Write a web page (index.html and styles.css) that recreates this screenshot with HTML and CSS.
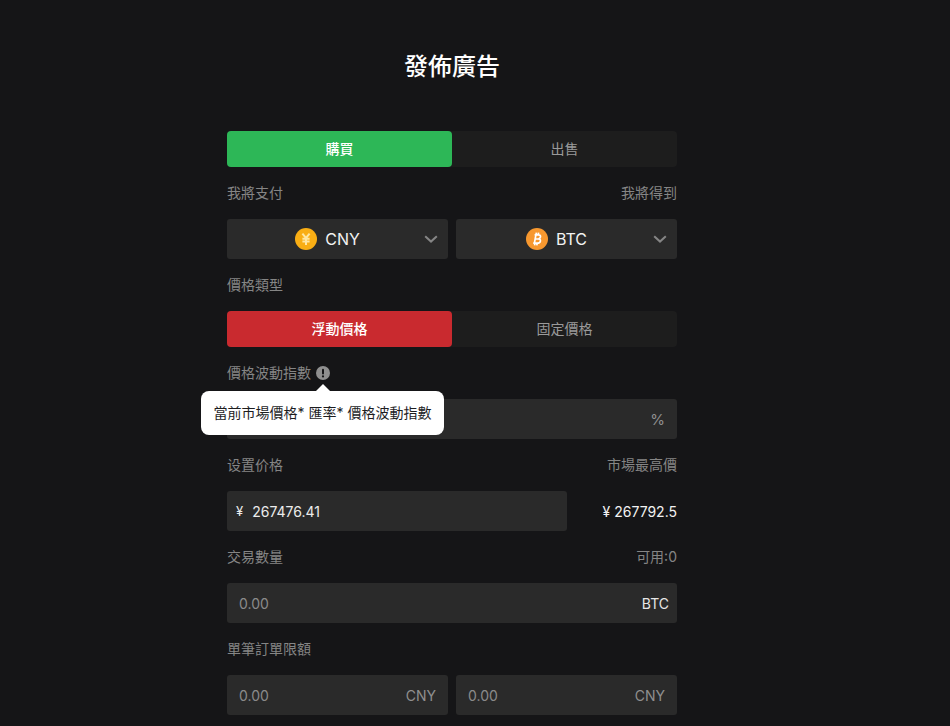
FILE: index.html
```html
<!DOCTYPE html>
<html lang="zh-Hant">
<head>
    <meta charset="UTF-8">
    <meta name="viewport" content="width=device-width, initial-scale=1.0">
    <title>發佈廣告</title>
    <link rel="stylesheet" href="styles.css">
</head>
<body>

<div class="page">
    <h1 class="title">發佈廣告</h1>

    <form class="ad-form">
        <div class="tabs">
            <div class="tab tab-buy">購買</div>
            <div class="tab">出售</div>
        </div>

        <div class="label-row">
            <span>我將支付</span>
            <span>我將得到</span>
        </div>
        <div class="pair">
            <div class="box select">
                <span class="coin">
                    <svg class="coin-icon" viewBox="0 0 22 22">
                        <circle cx="11" cy="11" r="11" fill="#f9ae14"/>
                        <path d="M7.4 5.6 11 10l3.6-4.4M7.4 10.8h7.2M7.4 13.4h7.2M11 10v7" fill="none" stroke="#ffe7a3" stroke-width="2"/>
                    </svg>
                    CNY
                </span>
                <svg class="chevron" viewBox="0 0 14 8"><path d="M1.2 1.2 7 6.6l5.8-5.4" fill="none" stroke="#858585" stroke-width="2"/></svg>
            </div>
            <div class="box select">
                <span class="coin">
                    <svg class="coin-icon" viewBox="0 0 22 22">
                        <circle cx="11" cy="11" r="11" fill="#f7982f"/>
                        <path d="M8.6 6.8h3.8c1.5 0 2.3.9 2.1 2.1-.1 1-.8 1.7-2 1.9 1.4.2 2.1 1.1 1.9 2.3-.2 1.4-1.4 2.1-3 2.1H7.2M9.9 6.8l-1.5 8.4M9.3 11h3.2M10.4 4.6l-.4 2.2M12.6 4.6l-.4 2.2M9 15.2l-.4 2.2M11.2 15.2l-.4 2.2" fill="none" stroke="#fff" stroke-width="1.7"/>
                    </svg>
                    BTC
                </span>
                <svg class="chevron" viewBox="0 0 14 8"><path d="M1.2 1.2 7 6.6l5.8-5.4" fill="none" stroke="#858585" stroke-width="2"/></svg>
            </div>
        </div>

        <div class="label-row">
            <span>價格類型</span>
        </div>
        <div class="tabs">
            <div class="tab tab-float">浮動價格</div>
            <div class="tab">固定價格</div>
        </div>

        <div class="label-row">
            <span class="label-hint">
                價格波動指數
                <svg class="hint-icon" viewBox="0 0 14 14">
                    <circle cx="7" cy="7" r="7" fill="#8f8f8f"/>
                    <rect x="6" y="2.8" width="2" height="5.6" rx="1" fill="#151517"/>
                    <circle cx="7" cy="10.4" r="1.1" fill="#151517"/>
                </svg>
            </span>
        </div>
        <div class="tip-wrap">
            <div class="box input">
                <span class="unit unit-muted unit-percent">%</span>
            </div>
            <div class="tooltip">當前市場價格* 匯率* 價格波動指數</div>
        </div>

        <div class="label-row">
            <span>设置价格</span>
            <span>市場最高價</span>
        </div>
        <div class="price-row">
            <div class="box input price-input">
                <span class="yen">¥</span>
                <span class="value">267476.41</span>
            </div>
            <span class="best-price">¥ 267792.5</span>
        </div>

        <div class="label-row">
            <span>交易數量</span>
            <span>可用:0</span>
        </div>
        <div class="box input input-tight">
            <span class="placeholder">0.00</span>
            <span class="unit">BTC</span>
        </div>

        <div class="label-row">
            <span>單筆訂單限額</span>
        </div>
        <div class="pair">
            <div class="box input">
                <span class="placeholder">0.00</span>
                <span class="unit unit-muted">CNY</span>
            </div>
            <div class="box input">
                <span class="placeholder">0.00</span>
                <span class="unit unit-muted">CNY</span>
            </div>
        </div>
    </form>
</div>

</body>
</html>
```

FILE: styles.css
```css
body, html {
    margin: 0;
    padding: 0;
    height: 100%;
    overflow: hidden;
    background-color: #151517;
    color: #fff;
    font-family: Inter, "Noto Sans CJK TC", sans-serif;
    font-size: 14px;
}

.page {
    width: 450px;
    margin-left: 227px;
    padding-top: 49px;
}

.title {
    margin: 0 0 46px;
    height: 36px;
    line-height: 36px;
    font-size: 24px;
    font-weight: 500;
    text-align: center;
}

.tabs {
    display: flex;
    height: 36px;
    background-color: #1d1d1d;
    border-radius: 4px;
}

.tab {
    flex: 1;
    display: flex;
    align-items: center;
    justify-content: center;
    padding-bottom: 2px;
    border-radius: 4px;
    color: #9a9a9a;
}

.tab-buy {
    background-color: #2db757;
    color: #fff;
    font-weight: 500;
}

.tab-float {
    background-color: #c92a2f;
    color: #fff;
    font-weight: 500;
}

/* Labels above the fields */
.label-row {
    display: flex;
    justify-content: space-between;
    align-items: center;
    height: 20px;
    margin: 16px 0;
    color: #858585;
    line-height: 20px;
}

.label-hint {
    display: flex;
    align-items: center;
    gap: 5px;
}

.hint-icon {
    width: 14px;
    height: 14px;
}

.pair {
    display: flex;
    gap: 8px;
}

.pair .box {
    flex: 1;
}

.box {
    display: flex;
    align-items: center;
    height: 40px;
    box-sizing: border-box;
    background-color: #2a2a2a;
    border-radius: 3px;
}

.select {
    position: relative;
    justify-content: center;
    padding-right: 20px;
}

.coin {
    display: flex;
    align-items: center;
    gap: 8px;
    font-size: 16px;
    color: #f2f2f2;
}

.coin-icon {
    width: 22px;
    height: 22px;
}

.chevron {
    position: absolute;
    right: 10px;
    top: 16px;
    width: 14px;
    height: 8px;
}

.input {
    justify-content: space-between;
    padding: 0 12px;
}

.input-tight {
    padding-right: 8px;
}

.placeholder {
    color: #8a8a8a;
}

.unit {
    font-size: 14px;
    color: #e6e6e6;
}

.unit-muted {
    color: #8f8f8f;
}

.unit-percent {
    margin-left: auto;
    font-size: 15px;
}

.tip-wrap {
    position: relative;
}

.tooltip {
    position: absolute;
    left: -26px;
    top: -8px;
    width: 243px;
    height: 44px;
    background-color: #fff;
    border-radius: 8px;
    color: #1d1d1f;
    font-size: 14px;
    line-height: 44px;
    text-align: center;
    white-space: nowrap;
}

.tooltip::before {
    content: "";
    position: absolute;
    left: 115px;
    top: -7px;
    border-left: 7px solid transparent;
    border-right: 7px solid transparent;
    border-bottom: 7px solid #fff;
}

.price-row {
    display: flex;
    align-items: center;
    justify-content: space-between;
}

.price-input {
    width: 340px;
    justify-content: flex-start;
    padding: 0 9px;
    gap: 9px;
    color: #ececec;
}

.yen {
    font-size: 13px;
}

.best-price {
    color: #f2f2f2;
}
```
